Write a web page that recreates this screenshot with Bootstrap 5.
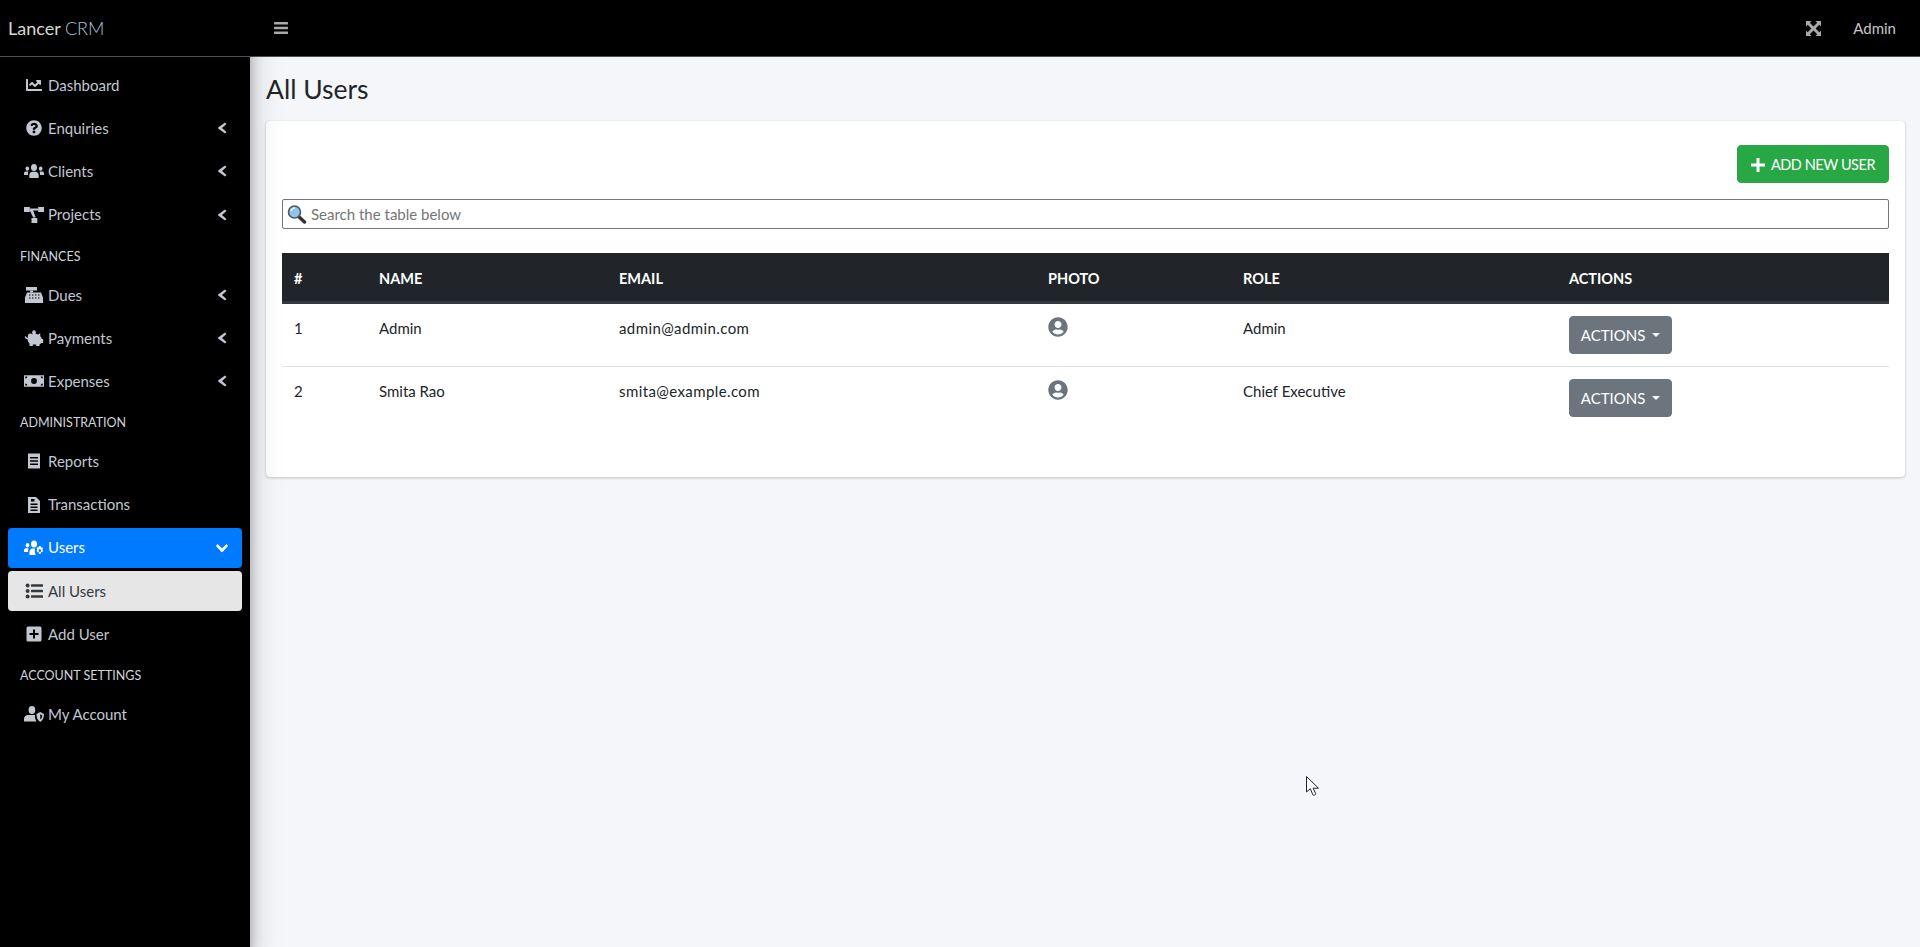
<!DOCTYPE html>
<html lang="en">
<head>
    <meta charset="UTF-8">
    <meta name="viewport" content="width=device-width, initial-scale=1.0">
    <title>Lancer CRM</title>
    <link rel="stylesheet" href="https://cdn.jsdelivr.net/npm/bootstrap@5.3.0/dist/css/bootstrap.min.css">
    <style>
        body { font-family: "Lato", "Liberation Sans", sans-serif; font-size: 15px; background: #f4f6f9; color: #212529; height: 947px; overflow: hidden; }
        .crm-shell { height: 947px; }
        .crm-side { width: 250px; background: #000; flex-shrink: 0; box-shadow: 0 14px 28px rgba(0,0,0,.25), 0 10px 10px rgba(0,0,0,.22); position: relative; z-index: 2; }
        .crm-brand { height: 57px; border-bottom: 1px solid #4b545c; padding-left: 8px; font-size: 18px; line-height: 56px; color: rgba(255,255,255,.85); }
        .crm-brand span { color: #b4c4d0; font-weight: 300; }
        .crm-menu { padding: 8px 8px 0; }
        .crm-menu .nav-link { height: 40px; margin-bottom: 3.2px; padding: 0 12px 0 16px; color: #c2c7d0; border-radius: 4px; display: flex; align-items: center; }
        .crm-menu .nav-link.is-open { background: #007bff; color: #fff; }
        .crm-menu .nav-link.is-here { background: #e6e6e6; color: #343a40; }
        .crm-ico { width: 20px; height: 16px; margin-right: 4px; flex-shrink: 0; fill: currentColor; }
        .crm-head { height: 37px; padding: 9px 12px 0; font-size: 12.5px; color: #d0d4db; text-transform: uppercase; line-height: 20px; }
        .crm-chev { width: 10px; height: 12px; margin-left: auto; margin-right: 3px; fill: currentColor; }
        .crm-chev-open { width: 12px; height: 10px; margin-right: 2px; }
        .crm-top { height: 57px; background: #000; border-bottom: 1px solid #4b545c; padding: 0 24px; color: #c6c6c6; }
        .crm-top svg { fill: #aaa; }
        .crm-gap { margin-left: 32px; }
        .crm-title { font-size: 26.5px; font-weight: 400; margin: 0; line-height: 31px; padding: 17px 0 16px; }
        .crm-body { padding: 0 15px 0 16px; }
        .crm-card { border: 0; border-radius: 4px; box-shadow: 0 0 1px rgba(0,0,0,.125), 0 1px 3px rgba(0,0,0,.2); padding: 24px 16px 48px; }
        .crm-add { width: 152px; height: 38px; background: #28a745; border-color: #28a745; border-radius: 4px; text-transform: uppercase; font-size: 14.5px; letter-spacing: -.45px; padding: 1px 0 0; gap: 6px; }
        .crm-search { margin: 16px 0 24px; }
        .crm-search input { height: 30px; width: 100%; border: 1px solid #767676; border-radius: 2px; padding: 0 8px 0 28px; font-size: 15px; display: block; outline: 0; }
        .crm-search input::placeholder { color: #757575; }
        .crm-search svg { position: absolute; left: 5px; top: 6px; }
        .crm-table { table-layout: fixed; margin: 0; font-size: 15px; }
        .crm-table thead th { background: #212529; color: #fff; border-bottom: 3px solid #32383e; text-transform: uppercase; font-weight: 700; font-size: 14.5px; padding: 14px 12px 10px; height: 49px; vertical-align: middle; }
        .crm-table td { padding: 13px 12px 12px; vertical-align: top; color: #212529; border-bottom: 1px solid #dee2e6; height: 63px; }
        .crm-table tr:last-child td { border-bottom: 0; }
        .crm-c1 { width: 85px; } .crm-c2 { width: 240px; } .crm-c3 { width: 429px; } .crm-c4 { width: 195px; } .crm-c5 { width: 326px; }
        .crm-mail { letter-spacing: .4px; }
        .crm-act { width: 103px; height: 38px; margin-top: -1px; padding: 1px 0 0; background: #6c757d; border-color: #6c757d; border-radius: 4px; font-size: 15px; text-transform: uppercase; vertical-align: top; }
        .crm-act::after { border-width: .33em .33em 0; margin-left: .45em; }
        .crm-pic { width: 20px; height: 20px; fill: #6c757d; display: block; }
        .crm-cursor { position: absolute; left: 1306px; top: 776px; z-index: 5; }
    </style>
</head>
<body>
    <svg width="0" height="0" class="position-absolute">
        <symbol id="i-chart" viewBox="0 0 512 512"><path d="M496 384H64V80c0-8.84-7.16-16-16-16H16C7.16 64 0 71.16 0 80v336c0 17.67 14.33 32 32 32h464c8.84 0 16-7.16 16-16v-32c0-8.84-7.16-16-16-16zM464 96H345.94c-21.38 0-32.09 25.85-16.97 40.97l32.4 32.4L288 242.75l-73.37-73.37c-12.5-12.5-32.76-12.5-45.25 0l-68.69 68.69c-6.25 6.25-6.25 16.38 0 22.63l22.62 22.62c6.25 6.25 16.38 6.25 22.63 0L192 237.25l73.37 73.37c12.5 12.5 32.76 12.5 45.25 0l96-96 32.4 32.4c15.12 15.12 40.97 4.41 40.97-16.97V112c.01-8.84-7.15-16-15.99-16z"/></symbol>
        <symbol id="i-help" viewBox="0 0 512 512"><path d="M504 256c0 136.997-111.043 248-248 248S8 392.997 8 256C8 119.083 119.043 8 256 8s248 111.083 248 248zM262.655 90c-54.497 0-89.255 22.957-116.549 63.758-3.536 5.286-2.353 12.415 2.715 16.258l34.699 26.31c5.205 3.947 12.621 3.008 16.665-2.122 17.864-22.658 30.113-35.797 57.303-35.797 20.429 0 45.698 13.148 45.698 32.958 0 14.976-12.363 22.667-32.534 33.976C247.128 238.528 216 254.941 216 296v4c0 6.627 5.373 12 12 12h56c6.627 0 12-5.373 12-12v-1.333c0-28.462 83.186-29.647 83.186-106.667 0-58.002-60.165-102-116.531-102zM256 338c-25.365 0-46 20.635-46 46 0 25.364 20.635 46 46 46s46-20.636 46-46c0-25.365-20.635-46-46-46z"/></symbol>
        <symbol id="i-users" viewBox="0 0 24 16" preserveAspectRatio="none"><circle cx="12" cy="4.500" r="3.600"/><path d="M6.400 15v-2.600C6.400 10 8.400 8.800 10 8.800h4c1.600 0 3.600 1.200 3.600 3.600V15z"/><circle cx="4" cy="5.600" r="2.200"/><circle cx="20" cy="5.600" r="2.200"/><path d="M0 12v-1.600C0 9 1 8.400 2.400 8.400h2.800C4.700 9.300 4.900 10.800 4.700 12zM24 12v-1.600C24 9 23 8.400 21.600 8.400h-2.800c.5.9.3 2.400.5 3.600z"/></symbol>
        <symbol id="i-tree" viewBox="0 0 24 16" preserveAspectRatio="none"><rect x="0" y="0" width="7" height="5"/><rect x="17" y="0" width="7" height="5"/><rect x="9" y="11" width="7" height="5"/><path d="M7 1.500h10v2H11l3 7h-3L7 3.500z"/></symbol>
        <symbol id="i-cash" viewBox="2 0 20 16"><rect x="4" y="0" width="11" height="3.500"/><rect x="8" y="3.500" width="3" height="2"/><path fill-rule="evenodd" d="M5 5.500h14l2 5v5.500H3v-5.500zM7 7.500v1h1.500v-1zm3 0v1h1.500v-1zm3 0v1h1.500v-1zm-6 3v1h1.500v-1zm3 0v1h1.500v-1zm3 0v1h1.500v-1zm3-3v1h1.500v-1zm0 3v1h1.500v-1z"/></symbol>
        <symbol id="i-pig" viewBox="0 0 24 16" preserveAspectRatio="none"><circle cx="12" cy="2.400" r="2.200"/><path d="M5 4.500C7 2.800 8.800 4 10 4.300 12.500 3.300 15 3.500 17 4.500l2.500-1.200v3c1 .8 1.500 1.800 1.800 2.600H23v4h-2.400c-.6.8-1.200 1.300-2 1.700V16h-4v-1.500h-4V16h-4v-2.500C5 12.300 4.300 10.800 4.300 9.300c-.7 0-3.300-.3-3.300-2.800 0-.7 1.100-.7 1.200.1.100.9 1.200 1.200 2.300 1.100C4.600 6.300 5 5.300 5 4.500z"/></symbol>
        <symbol id="i-money" viewBox="0 0 24 16"><path fill-rule="evenodd" d="M0 1h24v14H0zM12 4.500a3.500 3.500 0 1 0 0 7 3.500 3.500 0 0 0 0-7zM1.500 2.500v2.500a2.500 2.500 0 0 0 2.500-2.500zm18.500 0a2.500 2.500 0 0 0 2.500 2.500V2.500zM1.500 11v2.500H4A2.500 2.500 0 0 0 1.500 11zm21 0A2.500 2.500 0 0 0 20 13.500h2.500z"/></symbol>
        <symbol id="i-receipt" viewBox="2 0 20 16"><path fill-rule="evenodd" d="M6 0l1 1 1-1 1 1 1-1 1 1 1-1 1 1 1-1 1 1 1-1 1 1 1-1v16l-1-1-1 1-1-1-1 1-1-1-1 1-1-1-1 1-1-1-1 1-1-1-1 1zM8 4v1.500h8V4zm0 3.200v1.500h8V7.200zm0 3.200v1.500h8v-1.500z"/></symbol>
        <symbol id="i-file" viewBox="2 0 20 16"><path fill-rule="evenodd" d="M6 0h8l4 4v12H6zM8.500 6.500V8h7V6.500zm0 3v1.500h7V9.500zm0 3V14h7v-1.500zM9 2v2.500h3.500V2z"/></symbol>
        <symbol id="i-usercog" viewBox="0 0 24 16" preserveAspectRatio="none"><circle cx="12" cy="4" r="3.600"/><circle cx="4.200" cy="5.200" r="2.200"/><path d="M0 12v-1.600C0 9 1 8.200 2.400 8.200h2.900C4.800 9.200 5 10.600 4.900 12zM6.500 15v-2.600C6.500 10 8.400 8.500 10 8.500h3.200c-.5 2.400-.2 4.600 1.100 6.500z"/><path fill-rule="evenodd" d="M19 6l1.200.3.3 1.200 1.400-.3 1 1.500-.9 1 .9 1.100-1 1.500-1.400-.3-.3 1.400-1.200.6-1.200-.6-.3-1.400-1.400.3-1-1.500.9-1.100-.9-1 1-1.500 1.400.3.300-1.200zM19 9a1.500 1.500 0 1 0 0 3 1.500 1.500 0 0 0 0-3z"/></symbol>
        <symbol id="i-list" viewBox="2 0 20 16"><circle cx="5.600" cy="2.500" r="2"/><circle cx="5.600" cy="8" r="2"/><circle cx="5.600" cy="13.500" r="2"/><rect x="9" y="1.300" width="12" height="2.400" rx=".5"/><rect x="9" y="6.800" width="12" height="2.400" rx=".5"/><rect x="9" y="12.300" width="12" height="2.400" rx=".5"/></symbol>
        <symbol id="i-plusbox" viewBox="2 0 20 16"><path fill-rule="evenodd" d="M6 .5a1.500 1.500 0 0 0-1.500 1.500v12A1.500 1.500 0 0 0 6 15.500h12a1.500 1.500 0 0 0 1.500-1.500V2A1.500 1.500 0 0 0 18 .5zM11 3.500h2V7h3.500v2H13v3.500h-2V9H7.500V7H11z"/></symbol>
        <symbol id="i-shield" viewBox="0 0 24 16" preserveAspectRatio="none"><circle cx="9.500" cy="4" r="4"/><path d="M0 15.500v-2.500C0 10.500 2.500 9 4.500 9h8.700c-.3 2.500.4 4.800 1.800 6.500z"/><path fill-rule="evenodd" d="M19.500 6l4.500 2c0 3.500-1.300 6.500-4.500 8-3.200-1.500-4.500-4.500-4.500-8zm0 2.200v5.400c1.600-1 2.300-2.500 2.400-4.300z"/></symbol>
        <symbol id="i-left" viewBox="0 0 10 12"><path d="M8 .5l1.500 1.500L5 6l4.500 4-1.500 1.500L1.500 6.800a1 1 0 0 1 0-1.600z"/></symbol>
        <symbol id="i-down" viewBox="0 0 12 10"><path d="M1.400 1L0 3l5.200 5.800a1.100 1.100 0 0 0 1.600 0L12 3l-1.400-2L6 5.500z"/></symbol>
    </svg>

    <div class="crm-shell d-flex">
        <aside class="crm-side">
            <div class="crm-brand">Lancer <span>CRM</span></div>
            <nav class="crm-menu nav flex-column">
                <a class="nav-link" href="#"><svg class="crm-ico"><use href="#i-chart"/></svg><span>Dashboard</span></a>
                <a class="nav-link" href="#"><svg class="crm-ico"><use href="#i-help"/></svg><span>Enquiries</span><svg class="crm-chev"><use href="#i-left"/></svg></a>
                <a class="nav-link" href="#"><svg class="crm-ico"><use href="#i-users"/></svg><span>Clients</span><svg class="crm-chev"><use href="#i-left"/></svg></a>
                <a class="nav-link" href="#"><svg class="crm-ico"><use href="#i-tree"/></svg><span>Projects</span><svg class="crm-chev"><use href="#i-left"/></svg></a>
                <div class="crm-head">Finances</div>
                <a class="nav-link" href="#"><svg class="crm-ico"><use href="#i-cash"/></svg><span>Dues</span><svg class="crm-chev"><use href="#i-left"/></svg></a>
                <a class="nav-link" href="#"><svg class="crm-ico"><use href="#i-pig"/></svg><span>Payments</span><svg class="crm-chev"><use href="#i-left"/></svg></a>
                <a class="nav-link" href="#"><svg class="crm-ico"><use href="#i-money"/></svg><span>Expenses</span><svg class="crm-chev"><use href="#i-left"/></svg></a>
                <div class="crm-head">Administration</div>
                <a class="nav-link" href="#"><svg class="crm-ico"><use href="#i-receipt"/></svg><span>Reports</span></a>
                <a class="nav-link" href="#"><svg class="crm-ico"><use href="#i-file"/></svg><span>Transactions</span></a>
                <a class="nav-link is-open" href="#"><svg class="crm-ico"><use href="#i-usercog"/></svg><span>Users</span><svg class="crm-chev crm-chev-open"><use href="#i-down"/></svg></a>
                <a class="nav-link is-here" href="#"><svg class="crm-ico"><use href="#i-list"/></svg><span>All Users</span></a>
                <a class="nav-link" href="#"><svg class="crm-ico"><use href="#i-plusbox"/></svg><span>Add User</span></a>
                <div class="crm-head">Account Settings</div>
                <a class="nav-link" href="#"><svg class="crm-ico"><use href="#i-shield"/></svg><span>My Account</span></a>
            </nav>
        </aside>

        <div class="flex-grow-1">
            <header class="crm-top d-flex align-items-center justify-content-between">
                <svg width="14" height="14" viewBox="0 0 14 14"><rect y="1" width="14" height="2.400" rx=".6"/><rect y="5.800" width="14" height="2.400" rx=".6"/><rect y="10.600" width="14" height="2.400" rx=".6"/></svg>
                <div class="d-flex align-items-center">
                    <svg width="15" height="15" viewBox="0 0 15 15"><path d="M0 0h5.500L3.800 1.700 7.500 5.400 11.200 1.700 9.500 0H15v5.500l-1.700-1.700L9.600 7.500l3.700 3.700L15 9.500V15H9.500l1.700-1.700L7.500 9.600l-3.700 3.700L5.500 15H0V9.500l1.700 1.700 3.700-3.700L1.700 3.800 0 5.500z"/></svg>
                    <span class="crm-gap">Admin</span>
                </div>
            </header>

            <main class="crm-body">
                <h1 class="crm-title">All Users</h1>
                <div class="card crm-card">
                    <div class="d-flex justify-content-end">
                        <button class="btn btn-success crm-add d-flex align-items-center justify-content-center">
                            <svg width="14" height="14" viewBox="0 0 14 14" fill="#fff"><path d="M5.500 0h3v5.500H14v3H8.500V14h-3V8.500H0v-3h5.500z"/></svg>
                            <span>Add New User</span>
                        </button>
                    </div>
                    <div class="crm-search position-relative">
                        <input type="text" placeholder="Search the table below">
                        <svg width="20" height="19" viewBox="0 0 20 19"><line x1="11" y1="11" x2="17.500" y2="17" stroke="#333" stroke-width="3.400" stroke-linecap="round"/><circle cx="7.500" cy="7" r="6" fill="#8cc6ee" stroke="#555" stroke-width="1.600"/><path d="M4 6c.5-2 2-3 4-3" stroke="#e6f4fd" stroke-width="1.400" fill="none"/></svg>
                    </div>
                    <table class="table crm-table">
                        <colgroup>
                            <col class="crm-c1"><col class="crm-c2"><col class="crm-c3"><col class="crm-c4"><col class="crm-c5"><col>
                        </colgroup>
                        <thead>
                            <tr><th>#</th><th>Name</th><th>Email</th><th>Photo</th><th>Role</th><th>Actions</th></tr>
                        </thead>
                        <tbody>
                            <tr>
                                <td>1</td>
                                <td>Admin</td>
                                <td class="crm-mail">admin@admin.com</td>
                                <td><svg class="crm-pic" viewBox="0 0 496 512"><path d="M248 8C111 8 0 119 0 256s111 248 248 248 248-111 248-248S385 8 248 8zm0 96c48.600 0 88 39.400 88 88s-39.400 88-88 88-88-39.400-88-88 39.400-88 88-88zm0 344c-58.700 0-111.300-26.600-146.500-68.200 18.800-35.400 55.600-59.800 98.500-59.800 2.400 0 4.800.4 7.100 1.100 13 4.200 26.600 6.900 40.900 6.900 14.300 0 28-2.700 40.900-6.900 2.300-.7 4.700-1.100 7.100-1.100 42.900 0 79.700 24.400 98.500 59.800C359.300 421.400 306.700 448 248 448z"/></svg></td>
                                <td>Admin</td>
                                <td><button class="btn btn-secondary dropdown-toggle crm-act">Actions</button></td>
                            </tr>
                            <tr>
                                <td>2</td>
                                <td>Smita Rao</td>
                                <td class="crm-mail">smita@example.com</td>
                                <td><svg class="crm-pic" viewBox="0 0 496 512"><path d="M248 8C111 8 0 119 0 256s111 248 248 248 248-111 248-248S385 8 248 8zm0 96c48.600 0 88 39.400 88 88s-39.400 88-88 88-88-39.400-88-88 39.400-88 88-88zm0 344c-58.700 0-111.300-26.600-146.500-68.200 18.800-35.400 55.600-59.800 98.500-59.800 2.400 0 4.800.4 7.100 1.100 13 4.200 26.600 6.900 40.900 6.900 14.300 0 28-2.700 40.900-6.900 2.300-.7 4.700-1.100 7.100-1.100 42.900 0 79.700 24.400 98.500 59.800C359.300 421.400 306.700 448 248 448z"/></svg></td>
                                <td>Chief Executive</td>
                                <td><button class="btn btn-secondary dropdown-toggle crm-act">Actions</button></td>
                            </tr>
                        </tbody>
                    </table>
                </div>
            </main>
        </div>
    </div>

    <svg class="crm-cursor" width="14" height="21" viewBox="0 0 14 21"><path d="M.5.5v15.500l3.800-3.300 2.600 6.200c.4.900 3.200-.2 2.800-1.200L7.100 12.200h5.400z" fill="#fff" stroke="#1c2434" stroke-width="1"/></svg>

    <script src="https://cdn.jsdelivr.net/npm/bootstrap@5.3.0/dist/js/bootstrap.bundle.min.js"></script>
</body>
</html>
